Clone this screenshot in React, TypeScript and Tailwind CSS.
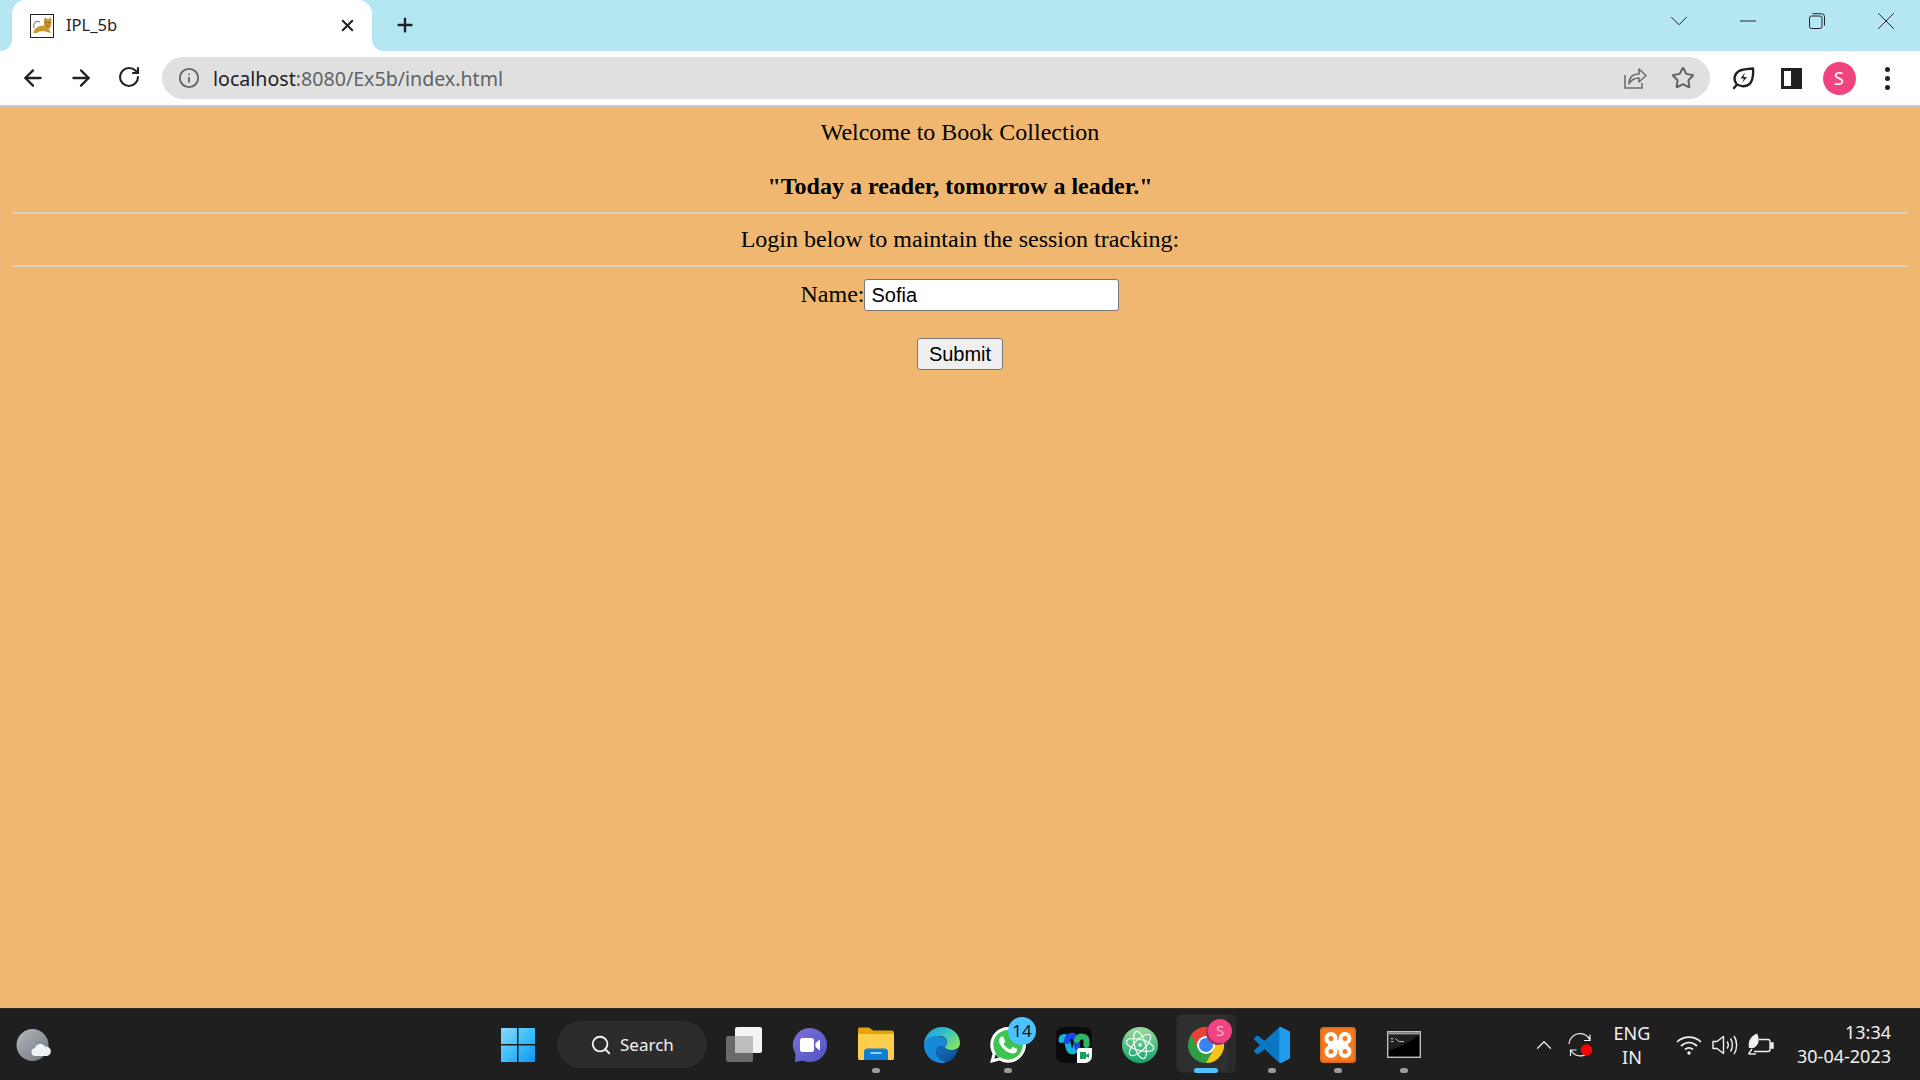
import { ArrowLeft, ArrowRight, RotateCw, Info, Star, Plus, X, Minus, ChevronDown, ChevronUp, Search } from "lucide-react";
import { SiWhatsapp } from "react-icons/si";

const VSCODE =
  "M70.9 99.3C72.5 99.9 74.3 99.9 75.9 99.1L96.5 89.2C98.6 88.2 100 86 100 83.6V16.4C100 14 98.6 11.8 96.5 10.8L75.9 .9C73.8 -.1 71.3 .1 69.5 1.4C69.3 1.6 69 1.8 68.8 2.1L29.4 38L12.2 25C10.6 23.8 8.4 23.9 6.9 25.2L1.4 30.3C-.5 31.9 -.5 34.8 1.4 36.4L16.2 50L1.4 63.6C-.5 65.2 -.5 68.1 1.4 69.7L6.9 74.8C8.4 76.1 10.6 76.2 12.2 75L29.4 62L68.8 97.9C69.4 98.5 70.1 99 70.9 99.3ZM75 27.3L45.1 50L75 72.7V27.3Z";

function TomcatIcon() {
  return (
    <svg width="24" height="24" viewBox="0 0 24 24">
      <rect x="0.5" y="0.5" width="23" height="23" fill="#fff" stroke="#222" />
      <path d="M3 19 C5 13 10 11 14 12 L14 6 L15 3 L17 5 L19 5 L21 3 L21.5 8 C21.5 12 20 14 19 15 L21 19 L17 18 C13 16 9 17 7 19 Z" fill="#c9962f" />
      <path d="M4 14 C3 9 6 6 10 8" fill="none" stroke="#8a8a8a" strokeWidth="1.2" />
      <path d="M15.5 8 L17 9 M20 8 L18.6 9 M17 12 L18.5 12" stroke="#5c3d10" strokeWidth="1" />
    </svg>
  );
}

function LeafIcon() {
  return (
    <svg width="24" height="24" viewBox="0 0 24 24" fill="none">
      <path d="M3 22 L6 18.5 C2 14 3 8 8 5 C12 3 17 3 22 2.5 C22.5 9 22 15 18 18.5 C14 21 10 20.5 6 18.5" stroke="#202124" strokeWidth="2.4" strokeLinejoin="round" strokeLinecap="round" />
      <path d="M14 6.5 L9.5 12.5 H13 L11 17 L16 11 H12.5 Z" fill="#202124" />
    </svg>
  );
}

function ShareIcon() {
  return (
    <svg width="24" height="24" viewBox="0 0 24 24" fill="none" stroke="#6b6d70" strokeWidth="1.6">
      <path d="M2 9 V22 H19 V17" />
      <path d="M6 18 C6 11 10 8 16 8 V3 L23 9.5 L16 16 V12 C11 12 8 14 6 18 Z" strokeLinejoin="round" />
    </svg>
  );
}

function WeatherIcon() {
  return (
    <svg width="36" height="34" viewBox="0 0 36 34">
      <defs>
        <linearGradient id="moon" x1="0" y1="0" x2="1" y2="1">
          <stop offset="0" stopColor="#b4bac0" />
          <stop offset="1" stopColor="#6d7379" />
        </linearGradient>
      </defs>
      <circle cx="17.5" cy="17" r="16" fill="url(#moon)" />
      <path d="M21 28 a4 4 0 0 1 -1 -8 a5.5 5.5 0 0 1 10 -1.5 a4.8 4.8 0 0 1 2 9.5 Z" fill="#f0f1f2" />
    </svg>
  );
}

function WindowsIcon() {
  return (
    <svg width="36" height="36" viewBox="0 0 36 36">
      <defs>
        <linearGradient id="win" x1="0" y1="0" x2="1" y2="1">
          <stop offset="0" stopColor="#8ed8fb" />
          <stop offset="0.5" stopColor="#3fc0fb" />
          <stop offset="1" stopColor="#0f93f5" />
        </linearGradient>
      </defs>
      <path d="M1 1 H17 V17 H1 Z M18.5 1 H35 V17 H18.5 Z M1 18.5 H17 V35 H1 Z M18.5 18.5 H35 V35 H18.5 Z" fill="url(#win)" />
    </svg>
  );
}

function TaskViewIcon() {
  return (
    <svg width="36" height="36" viewBox="0 0 36 36">
      <rect x="0" y="9" width="27" height="26" rx="2" fill="#6a6a6a" />
      <rect x="9" y="0" width="27" height="26" rx="2" fill="#f4f4f4" />
      <rect x="9" y="9" width="18" height="17" fill="#bdbdbd" />
    </svg>
  );
}

function TeamsIcon() {
  return (
    <svg width="36" height="36" viewBox="0 0 36 36">
      <defs>
        <linearGradient id="teams" x1="0" y1="0" x2="1" y2="1">
          <stop offset="0" stopColor="#7d6fd6" />
          <stop offset="1" stopColor="#4f55c4" />
        </linearGradient>
      </defs>
      <path d="M18 1 A17 17 0 1 1 11 33.5 L3 35 L3.5 27 A17 17 0 0 1 18 1 Z" fill="url(#teams)" />
      <rect x="8" y="11" width="14" height="14" rx="2.5" fill="#fff" />
      <path d="M23.5 16 L28 12.5 V23.5 L23.5 20 Z" fill="#fff" />
    </svg>
  );
}

function ExplorerIcon() {
  return (
    <svg width="36" height="36" viewBox="0 0 36 36">
      <path d="M0 3 C0 1 1 0.5 2 0.5 H11 L15 3.5 H34 C35 3.5 36 4.5 36 6 V10 H0 Z" fill="#e5a40b" />
      <path d="M0 7 H36 V31 C36 32.5 35 33 34 33 H2 C1 33 0 32.5 0 31 Z" fill="#fdcd4c" />
      <path d="M6 33 V25 C6 23 7.5 21.5 9.5 21.5 H26.5 C28.5 21.5 30 23 30 25 V33 Z" fill="#0f7fd6" />
      <rect x="12" y="25" width="12" height="2" rx="1" fill="#8fd0f7" />
    </svg>
  );
}

function EdgeIcon() {
  return (
    <svg width="36" height="36" viewBox="0 0 36 36">
      <defs>
        <linearGradient id="edgeA" x1="0" y1="0" x2="1" y2="0.6">
          <stop offset="0" stopColor="#0f9ad6" />
          <stop offset="0.55" stopColor="#36c2c8" />
          <stop offset="1" stopColor="#7de06a" />
        </linearGradient>
        <linearGradient id="edgeB" x1="0" y1="0" x2="1" y2="1">
          <stop offset="0" stopColor="#0f70c9" />
          <stop offset="1" stopColor="#114a8b" />
        </linearGradient>
      </defs>
      <path d="M18 0 C28 0 36 7 36 16 C36 21 32 23 28 23 C24 23 21 22 21 20 C21 19 23 18 23 15 C23 11 19 9 15 9 C9 9 0 13 0 18 C0 8 8 0 18 0 Z" fill="url(#edgeA)" />
      <path d="M0 18 C0 13 6 9 13 9 C19 9 23 12 23 15 C23 17 21 19 21 20 C16 18 12 20 12 24 C12 29 16 34 23 35 C21 35.6 19.5 36 18 36 C8 36 0 28 0 18 Z" fill="#1689d8" />
      <path d="M12 24 C12 20 16 18 21 20 C21 22 24 24 29 23 C31 23 33 22.5 34 22 C32 30 26 35 23 35 C16 34 12 29 12 24 Z" fill="url(#edgeB)" />
    </svg>
  );
}

function WhatsappIcon() {
  return (
    <div className="relative w-[36px] h-[36px]">
      <div className="absolute left-[2px] top-[2px] w-[32px] h-[32px] rounded-full bg-[#3fc451]" />
      <SiWhatsapp className="absolute inset-0 w-[36px] h-[36px] text-white" />
    </div>
  );
}

function WebexIcon() {
  return (
    <svg width="36" height="36" viewBox="0 0 36 36">
      <rect width="36" height="36" rx="7" fill="#0b0b0c" />
      <path d="M5.5 13 C5.5 9 10 9 11 13 L12.5 20 C13.5 25.5 18.5 25.5 19.5 21 L20 19" fill="none" stroke="#14b5d8" strokeWidth="6" strokeLinecap="round" />
      <path d="M11 14 C12 7 19 7 20 13 L21.5 21" fill="none" stroke="#1b45e4" strokeWidth="6" strokeLinecap="round" />
      <path d="M21 13 C23 8 30 9 30.5 13 V18" fill="none" stroke="#2fb56a" strokeWidth="6" strokeLinecap="round" />
      <path d="M21 36 V24 C21 22 22 21 24 21 H36 V29 A7 7 0 0 1 29 36 Z" fill="#fff" />
      <path d="M24 25 H30 V32 H24 Z M30 28 L33 26 V31 L30 29.5 Z" fill="#17a15f" />
    </svg>
  );
}

function AtomIcon() {
  return (
    <svg width="36" height="36" viewBox="0 0 36 36">
      <defs>
        <linearGradient id="atom" x1="0" y1="0" x2="0" y2="1">
          <stop offset="0" stopColor="#9ddb9f" />
          <stop offset="1" stopColor="#0fa56c" />
        </linearGradient>
      </defs>
      <circle cx="18" cy="18" r="18" fill="url(#atom)" />
      <g fill="none" stroke="#f2f8f2" strokeWidth="1.3">
        <ellipse cx="18" cy="18" rx="14" ry="5.5" transform="rotate(15 18 18)" />
        <ellipse cx="18" cy="18" rx="14" ry="5.5" transform="rotate(75 18 18)" />
        <ellipse cx="18" cy="18" rx="14" ry="5.5" transform="rotate(-45 18 18)" />
      </g>
      <circle cx="18" cy="18" r="1.8" fill="#f2f8f2" />
    </svg>
  );
}

function ChromeIcon() {
  return (
    <svg width="36" height="36" viewBox="0 0 36 36">
      <circle cx="18" cy="18" r="18" fill="#2f9e44" />
      <path d="M18 36 A18 18 0 0 0 33.6 9 L18 9 L26 22 Z" fill="#fbc21a" />
      <path d="M33.6 9 A18 18 0 0 0 3 8 L10.5 21 L18 9.5 Z" fill="#ea4335" />
      <circle cx="18" cy="18" r="9" fill="#fff" />
      <circle cx="18" cy="18" r="7" fill="#3b82f0" />
    </svg>
  );
}

function VscodeIcon() {
  return (
    <svg width="36" height="36" viewBox="0 0 100 100">
      <defs>
        <clipPath id="vsRight">
          <rect x="70" y="0" width="30" height="100" />
        </clipPath>
      </defs>
      <path d={VSCODE} fill="#0a78c4" />
      <path d={VSCODE} fill="#1f9cf0" clipPath="url(#vsRight)" />
    </svg>
  );
}

function XamppIcon() {
  return (
    <svg width="36" height="36" viewBox="0 0 36 36">
      <rect width="36" height="36" rx="4" fill="#f47b20" />
      <rect x="1" y="1" width="34" height="34" rx="3.5" fill="none" stroke="#c85f12" />
      <g fill="none" stroke="#fff" strokeWidth="4">
        <circle cx="11" cy="11.5" r="4.5" />
        <circle cx="25" cy="11.5" r="4.5" />
        <circle cx="11" cy="24.5" r="4.5" />
        <circle cx="25" cy="24.5" r="4.5" />
      </g>
      <rect x="13" y="13" width="10" height="10" fill="#fff" />
      <path d="M8 18 H14 M22 18 H28" stroke="#fff" strokeWidth="5" />
    </svg>
  );
}

function CmdIcon() {
  return (
    <svg width="34" height="27" viewBox="0 0 36 28" preserveAspectRatio="none">
      <rect x="0.75" y="0.75" width="34.5" height="26.5" fill="#000" stroke="#b9c0c8" strokeWidth="1.5" />
      <rect x="1.5" y="1.5" width="33" height="2" fill="#8d939a" />
      <path d="M4 8 H7 M4 11 H7 M9 8 L13 11 H18" stroke="#c9c9c9" strokeWidth="1" fill="none" />
      <path d="M1.5 20 C12 18 24 12 34.5 4 V1.5 H1.5 Z" fill="#fff" opacity="0.12" />
    </svg>
  );
}

function SyncIcon() {
  return (
    <svg width="26" height="26" viewBox="0 0 26 26" fill="none" stroke="#f2f2f2" strokeWidth="1.2">
      <path d="M1 12 A11 11 0 0 1 22 8 M22 2.5 V8.5 H16" />
      <path d="M23 16 A11 11 0 0 1 3 18.5 M2.5 24 V18 H8.5" />
      <circle cx="18.5" cy="18" r="5.8" fill="#ff0000" stroke="none" />
    </svg>
  );
}

function WifiIcon() {
  return (
    <svg width="26" height="20" viewBox="0 0 26 20" fill="none" stroke="#f2f2f2" strokeWidth="1.7">
      <path d="M1 7 C8 0.5 18 0.5 25 7" />
      <path d="M5 11 C10 6.5 16 6.5 21 11" />
      <path d="M9 14.5 C11.5 12.5 14.5 12.5 17 14.5" />
      <circle cx="13" cy="18" r="1.7" fill="#f2f2f2" stroke="none" />
    </svg>
  );
}

function SpeakerIcon() {
  return (
    <svg width="26" height="22" viewBox="0 0 26 22" fill="none" stroke="#f2f2f2" strokeWidth="1.4">
      <path d="M1 7.5 H5 L11.5 2.5 V19.5 L5 14.5 H1 Z" strokeLinejoin="round" />
      <path d="M15 7.5 C16.5 9.5 16.5 12.5 15 14.5" />
      <path d="M18.5 4.5 C21 8 21 14 18.5 17.5" />
      <path d="M22 2 C25.5 7 25.5 15 22 20" />
    </svg>
  );
}

function BatteryIcon() {
  return (
    <svg width="26" height="24" viewBox="0 0 26 24" fill="none" stroke="#f2f2f2" strokeWidth="1.4">
      <path d="M11 6.5 H20 A2 2 0 0 1 22 8.5 V16.5 A2 2 0 0 1 20 18.5 H6" />
      <path d="M22.5 10 H25 V15 H22.5" fill="#f2f2f2" />
      <path d="M1 15 C-0.5 8 3 3 9 0.5 C12 6 11 13 5 15 Z" fill="#f2f2f2" stroke="none" />
      <path d="M0.5 21 L4 16" />
      <path d="M1 21 H8" />
    </svg>
  );
}

function Slot({ children, dot, active }: { children: React.ReactNode; dot?: boolean; active?: boolean }) {
  return (
    <div className="relative w-[66px] h-[71px] flex items-center justify-center">
      {active && (
        <>
          <div className="absolute left-[8px] top-[5px] w-[55px] h-[59px] rounded-[6px] bg-[#2a2a2a]" />
          <div className="absolute left-[3px] top-[5px] w-[53px] h-[59px] rounded-[6px] bg-[#2f2f2f] border border-[#262626]" />
        </>
      )}
      <div className="relative">{children}</div>
      {dot && <div className="absolute bottom-[7px] left-[29px] w-[8px] h-[5px] rounded-full bg-[#9b9b9b]" />}
      {active && <div className="absolute bottom-[7px] left-[21px] w-[24px] h-[5px] rounded-full bg-[#4cc2ff]" />}
    </div>
  );
}

const serif = { fontFamily: '"Liberation Serif", serif' };

export default function App() {
  return (
    <div className="w-screen h-screen overflow-hidden flex flex-col font-['Noto_Sans',sans-serif]">
      {/* Tab strip */}
      <div className="h-[51px] bg-[#b5e7f3] flex items-stretch shrink-0">
        <div className="relative ml-[12px] w-[360px] bg-white rounded-t-[14px] flex items-center pl-[18px] pr-[15px]">
          <div className="absolute -left-[12px] bottom-0 w-[12px] h-[12px] bg-white">
            <div className="w-full h-full bg-[#b5e7f3] rounded-br-[12px]" />
          </div>
          <div className="absolute -right-[12px] bottom-0 w-[12px] h-[12px] bg-white">
            <div className="w-full h-full bg-[#b5e7f3] rounded-bl-[12px]" />
          </div>
          <TomcatIcon />
          <span className="ml-[12px] text-[16.5px] text-[#1f2328] flex-1">IPL_5b</span>
          <X className="w-[19px] h-[19px] text-[#202124]" strokeWidth={2.6} />
        </div>
        <Plus className="ml-[22px] mt-[14px] w-[22px] h-[22px] text-[#202124]" strokeWidth={2.6} />
        <div className="ml-auto flex">
          <div className="w-[69px] h-[42px] flex items-center justify-center">
            <ChevronDown className="w-[30px] h-[30px] text-[#202124]" strokeWidth={0.8} />
          </div>
          <div className="w-[69px] h-[42px] flex items-center justify-center">
            <Minus className="w-[26px] h-[26px] text-[#202124]" strokeWidth={0.9} />
          </div>
          <div className="w-[69px] h-[42px] flex items-center justify-center">
            <svg width="16" height="16" viewBox="0 0 16 16" fill="none" stroke="#202124" strokeWidth="1">
              <rect x="0.5" y="3" width="12.5" height="12.5" rx="2" />
              <path d="M3.5 0.7 H12.5 A3 3 0 0 1 15.5 3.7 V12.5" />
            </svg>
          </div>
          <div className="w-[69px] h-[42px] flex items-center justify-center">
            <X className="w-[30px] h-[30px] text-[#202124]" strokeWidth={0.8} />
          </div>
        </div>
      </div>

      {/* Toolbar */}
      <div className="h-[56px] bg-white flex items-center shrink-0 border-b-2 border-[#cccccc]">
        <div className="w-[162px] flex pl-[9px]">
          <div className="w-[48px] flex justify-center">
            <ArrowLeft className="w-[26px] h-[26px] text-[#202124]" strokeWidth={2.1} />
          </div>
          <div className="w-[48px] flex justify-center">
            <ArrowRight className="w-[26px] h-[26px] text-[#202124]" strokeWidth={2.1} />
          </div>
          <div className="w-[48px] flex justify-center">
            <RotateCw className="w-[24px] h-[24px] text-[#202124]" strokeWidth={2.1} />
          </div>
        </div>
        <div className="w-[1548px] h-[42px] rounded-full bg-[#e0e0e0] flex items-center pl-[16px] pr-[15px]">
          <Info className="w-[22px] h-[22px] text-[#5f6368]" strokeWidth={2} />
          <span className="ml-[13px] pt-[2px] text-[19.6px] leading-none text-[#5f6368] flex-1">
            <span className="text-[#202124]">localhost</span>:8080/Ex5b/index.html
          </span>
          <ShareIcon />
          <Star className="ml-[24px] w-[24px] h-[24px] text-[#5f6368]" strokeWidth={2} />
        </div>
        <div className="ml-[9px] w-[48px] flex justify-center">
          <LeafIcon />
        </div>
        <div className="w-[48px] flex justify-center">
          <div className="w-[21px] h-[21px] border-[3px] border-[#202124] bg-white flex justify-end">
            <div className="w-[8px] bg-[#202124]" />
          </div>
        </div>
        <div className="w-[48px] flex justify-center">
          <div className="w-[33px] h-[33px] rounded-full bg-[#ef4480] text-white text-[18px] flex items-center justify-center">S</div>
        </div>
        <div className="w-[48px] flex flex-col items-center gap-[4px]">
          <div className="w-[5px] h-[5px] rounded-full bg-[#202124]" />
          <div className="w-[5px] h-[5px] rounded-full bg-[#202124]" />
          <div className="w-[5px] h-[5px] rounded-full bg-[#202124]" />
        </div>
      </div>

      {/* Page */}
      <div className="flex-1 bg-[#efb76f] px-[13px] pt-[10px] text-black text-center text-[24px] leading-[30px]" style={serif}>
        <p className="mb-[24px]">Welcome to Book Collection</p>
        <p className="font-bold">"Today a reader, tomorrow a leader."</p>
        <hr className="mt-[11px] border-t-2 border-[#d9d3c6]" />
        <p className="mt-[10px]">Login below to maintain the session tracking:</p>
        <hr className="mt-[11px] border-t-2 border-[#d9d3c6]" />
        <div className="mt-[12px] flex justify-center items-center h-[32px]">
          <label className="-mt-[2px]">Name:</label>
          <input
            readOnly
            value="Sofia"
            className="w-[255px] h-[32px] bg-white border border-[#767676] rounded-[3px] px-[6px] text-[20px] text-black font-['Liberation_Sans',sans-serif] outline-none"
          />
        </div>
        <button className="mt-[27px] w-[86px] h-[32px] bg-[#efefef] border border-[#767676] rounded-[3px] text-[20px] text-black font-['Liberation_Sans',sans-serif]">
          Submit
        </button>
      </div>

      {/* Taskbar */}
      <div className="h-[72px] bg-[#1f1f1f] border-t border-[#2e2e2e] flex items-start shrink-0 text-[#f2f2f2]">
        <div className="w-[66px] h-[71px] flex items-center justify-center">
          <WeatherIcon />
        </div>
        <div className="ml-[419px] flex items-center">
          <Slot><WindowsIcon /></Slot>
          <div className="ml-[6px] mr-[4px] w-[150px] h-[47px] rounded-full bg-[#2c2c2c] flex items-center pl-[33px]">
            <Search className="w-[22px] h-[22px]" strokeWidth={2} />
            <span className="ml-[8px] text-[17px]">Search</span>
          </div>
          <Slot><TaskViewIcon /></Slot>
          <Slot><TeamsIcon /></Slot>
          <Slot dot><ExplorerIcon /></Slot>
          <Slot><EdgeIcon /></Slot>
          <Slot dot>
            <WhatsappIcon />
            <div className="absolute left-[18px] -top-[10px] w-[28px] h-[28px] rounded-full bg-[#4cc2ff] text-[#111] text-[17px] flex items-center justify-center">14</div>
          </Slot>
          <Slot><WebexIcon /></Slot>
          <Slot><AtomIcon /></Slot>
          <Slot active>
            <ChromeIcon />
            <div className="absolute left-[18px] -top-[6px] w-[24px] h-[24px] rounded-full bg-[#a6305c]" />
            <div className="absolute left-[20px] -top-[8px] w-[24px] h-[24px] rounded-full bg-[#ef4480] text-[#f8b7cf] text-[15px] flex items-center justify-center">S</div>
          </Slot>
          <Slot dot><VscodeIcon /></Slot>
          <Slot dot><XamppIcon /></Slot>
          <Slot dot><CmdIcon /></Slot>
        </div>
        <div className="ml-auto pr-[29px] h-[71px] flex items-center">
          <div className="w-[36px] flex justify-center">
            <ChevronUp className="w-[26px] h-[26px]" strokeWidth={1.1} />
          </div>
          <div className="w-[37px] flex justify-center">
            <SyncIcon />
          </div>
          <div className="w-[66px] text-center text-[18px] leading-[24px]">
            <div>ENG</div>
            <div>IN</div>
          </div>
          <div className="ml-[6px] w-[36px] flex justify-center">
            <WifiIcon />
          </div>
          <div className="w-[36px] flex justify-center">
            <SpeakerIcon />
          </div>
          <div className="w-[36px] flex justify-center">
            <BatteryIcon />
          </div>
          <div className="w-[112px] -mt-[2px] text-right text-[18px] leading-[24px]">
            <div>13:34</div>
            <div>30-04-2023</div>
          </div>
        </div>
      </div>
    </div>
  );
}
